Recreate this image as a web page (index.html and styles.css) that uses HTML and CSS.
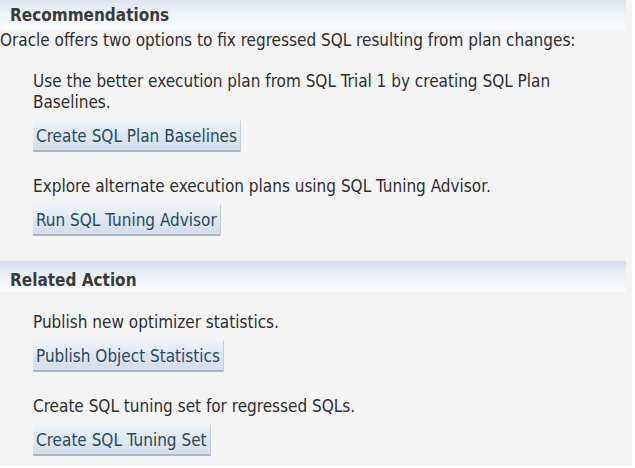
FILE: index.html
```html
<!DOCTYPE html>
<html>
<head>
<meta charset="utf-8">
<link rel="stylesheet" href="styles.css">
</head>
<body>
<div class="page">
  <section class="section">
    <h2 class="section-head">Recommendations</h2>
    <p class="intro">Oracle offers two options to fix regressed SQL resulting from plan changes:</p>
    <div class="item">
      <p class="desc">Use the better execution plan from SQL Trial 1 by creating SQL Plan<br>Baselines.</p>
      <button class="btn">Create SQL Plan Baselines</button>
    </div>
    <div class="item">
      <p class="desc">Explore alternate execution plans using SQL Tuning Advisor.</p>
      <button class="btn">Run SQL Tuning Advisor</button>
    </div>
  </section>
  <section class="section">
    <h2 class="section-head">Related Action</h2>
    <div class="item">
      <p class="desc">Publish new optimizer statistics.</p>
      <button class="btn">Publish Object Statistics</button>
    </div>
    <div class="item">
      <p class="desc">Create SQL tuning set for regressed SQLs.</p>
      <button class="btn">Create SQL Tuning Set</button>
    </div>
  </section>
</div>
</body>
</html>
```

FILE: styles.css
```css
html, body {
  margin: 0;
  padding: 0;
  background: #ffffff;
}
.page {
  width: 632px;
  height: 466px;
  background: #f4f4f4;
  font-family: "DejaVu Sans Condensed", "DejaVu Sans", sans-serif;
  font-size: 17px;
  color: #2e2e2e;
  overflow: hidden;
}
.section-head {
  margin: 0;
  height: 30px;
  box-sizing: border-box;
  padding: 5px 0 0 10px;
  margin-right: 6px;
  font-size: 17px;
  font-weight: bold;
  color: #3a3a3a;
  background: linear-gradient(to bottom, #dde3ed 0%, #eef1f7 45%, #fbfcfe 100%);
  border-bottom: 1px solid #fafbfd;
}
.section + .section .section-head {
  margin-top: 25px;
  padding-top: 9px;
  height: 31px;
  background: linear-gradient(to bottom, #d6deea 0%, #e8edf5 40%, #fafbfd 100%);
}
.intro {
  margin: 0;
  line-height: 21px;
}
.item {
  padding-left: 33px;
}
.desc {
  margin: 24px 0 0 0;
  line-height: 21px;
}
.item:first-of-type .desc {
  margin-top: 20px;
}
.btn {
  display: block;
  margin-top: 7px;
  height: 32px;
  padding: 0 3px;
  font-family: "DejaVu Sans Condensed", "DejaVu Sans", sans-serif;
  font-size: 17px;
  color: #2a4a5e;
  border: none;
  border-top: 1px solid #f0f4fa;
  border-bottom: 2px solid #a9b6c7;
  border-right: 1px solid #c3ccd9;
  background: linear-gradient(to bottom, #eef2f8 0%, #dfe6f0 50%, #d3dce8 100%);
  border-radius: 1px;
}
```
